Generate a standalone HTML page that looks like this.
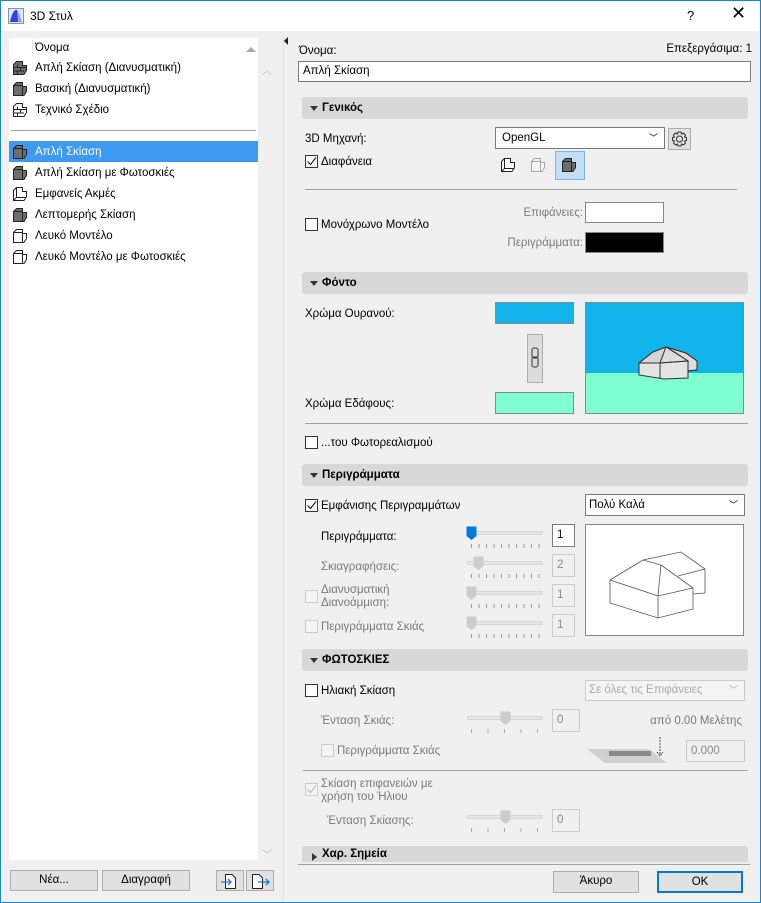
<!DOCTYPE html>
<html><head><meta charset="utf-8"><style>
*{box-sizing:border-box;margin:0;padding:0}
body{width:761px;height:903px;overflow:hidden;background:#f0f0f0;font-family:"Liberation Sans","DejaVu Sans",sans-serif;font-size:11.5px;color:#000;position:relative}
.a{position:absolute;white-space:nowrap}
.t{position:absolute;white-space:nowrap;line-height:14px}
.g{color:#7a7a7a}
.hdr{position:absolute;left:302px;width:446px;height:22px;background:#d8d8d8;border-radius:3px;font-weight:bold;line-height:22px;padding-left:20px}
.hdr:before{content:"";position:absolute;left:8px;top:9px;border-left:4px solid transparent;border-right:4px solid transparent;border-top:5px solid #333}
.hdr.c:before{left:10px;top:7px;border-top:4px solid transparent;border-bottom:4px solid transparent;border-left:5px solid #333;border-right:0}
.cb{position:absolute;width:13px;height:13px;border:1px solid #333;background:#fff}
.cb.d{border-color:#ccc;background:#f4f4f4}
.box{position:absolute;border:1px solid #7a7a7a;background:#fff}
.btn{position:absolute;border:1px solid #adadad;background:#e1e1e1;text-align:center;line-height:19px}
.line{position:absolute;height:1px;background:#a0a0a0}
.trk{position:absolute;height:4px;background:#e7e7e7;border:1px solid #d6d6d6}
.vb{position:absolute;width:23px;height:23px;border:1px solid #ccc;background:#f0f0f0;line-height:21px;padding-left:4px;color:#888}
.ticks{position:absolute;height:4px;background:repeating-linear-gradient(90deg,#999 0 1px,transparent 1px 7.5px)}
</style></head><body>
<div class="a" style="left:0;top:0;width:761px;height:903px;border:1px solid #1883d7;z-index:9;pointer-events:none"></div>
<div class="a" style="left:0;top:0;width:761px;height:31px;background:#fff"></div>
<svg class="a" style="left:8px;top:8px" width="16" height="16"><rect x=".5" y=".5" width="15" height="15" fill="#dfe6f7" stroke="#8090c0"/><path d="M2 14 C4 4 7 1 9 2 C11 4 12 10 14 14 Z" fill="#2c45e0"/><path d="M9 2 C11 4 12 10 14 14 L10 14 Z" fill="#8fa2f5"/></svg>
<div class="t" style="left:30px;top:9px;font-size:12px">3D Στυλ</div>
<div class="t" style="left:687px;top:9px;font-size:13px">?</div>
<div class="t" style="left:731px;top:6px;font-size:18px;font-weight:300">✕</div>

<div class="a" style="left:9px;top:38px;width:249px;height:822px;background:#fff"></div>
<div class="a" style="left:32px;top:39px;width:1px;height:17px;background:#e5e5e5"></div>
<div class="t" style="left:35px;top:41px">Όνομα</div>
<div class="a" style="left:246px;top:47px;border-left:5px solid transparent;border-right:5px solid transparent;border-bottom:5px solid #aaa"></div>
<div class="a" style="left:262px;top:62px;color:#bbb;font-size:10px">︿</div>
<div class="a" style="left:262px;top:846px;color:#bbb;font-size:10px">﹀</div>
<div class="a" style="left:11px;top:130px;width:245px;height:1px;background:#a0a0a0"></div>
<div class="a" style="left:9px;top:141px;width:249px;height:21px;background:#3d9af0"></div>
<svg width="0" height="0" style="position:absolute"><defs>
<g id="cf"><path d="M1.5 4.5 L4.5 1.5 H10.5 V5.5 H14.5 V10.5 L12 14.5 H1.5 Z" fill="#6e6e6e" stroke="#222"/><path d="M1.5 4.5 H10.5 M10.5 5.5 V14.5" stroke="#222" fill="none"/></g>
<g id="cw"><path d="M1.5 4.5 L4.5 1.5 H10.5 V5.5 H14.5 V10.5 L12 14.5 H1.5 Z" fill="#fff" stroke="#222"/><path d="M1.5 4.5 H10.5 M10.5 5.5 V14.5" stroke="#222" fill="none"/></g>
<g id="cb"><path d="M1.5 4.5 L4.5 1.5 H10.5 V5.5 H14.5 V10.5 L12 14.5 H1.5 Z" fill="#6e6e6e" stroke="#222"/><path d="M1.5 7.5 H14.5 M1.5 11 H12 M5.5 4.5 V7.5 M8.5 7.5 V11 M5.5 11 V14.5" stroke="#222" fill="none"/></g>
<g id="cbw"><path d="M1.5 4.5 L4.5 1.5 H10.5 V5.5 H14.5 V10.5 L12 14.5 H1.5 Z" fill="#fff" stroke="#222"/><path d="M1.5 7.5 H14.5 M1.5 11 H12 M5.5 4.5 V7.5 M8.5 7.5 V11 M5.5 11 V14.5" stroke="#222" fill="none"/></g>
<g id="ce"><path d="M1.5 4.5 L4.5 1.5 H10.5 V5.5 H14.5 V10.5 L12 14.5 H1.5 Z" fill="#fff" stroke="#222"/><path d="M4.5 1.5 V11.5 H14.5 M1.5 14.5 L4.5 11.5" stroke="#222" fill="none"/></g>
</defs></svg>
<svg class="a" style="left:12px;top:60px" width="16" height="16"><use href="#cb"/></svg><div class="t" style="left:35px;top:61px">Απλή Σκίαση (Διανυσματική)</div>
<svg class="a" style="left:12px;top:81px" width="16" height="16"><use href="#cf"/></svg><div class="t" style="left:35px;top:82px">Βασική (Διανυσματική)</div>
<svg class="a" style="left:12px;top:102px" width="16" height="16"><use href="#cbw"/></svg><div class="t" style="left:35px;top:103px">Τεχνικό Σχέδιο</div>
<svg class="a" style="left:12px;top:144px" width="16" height="16"><use href="#cf"/></svg><div class="t" style="left:35px;top:145px;color:#fff">Απλή Σκίαση</div>
<svg class="a" style="left:12px;top:165px" width="16" height="16"><use href="#cf"/></svg><div class="t" style="left:35px;top:166px">Απλή Σκίαση με Φωτοσκιές</div>
<svg class="a" style="left:12px;top:186px" width="16" height="16"><use href="#ce"/></svg><div class="t" style="left:35px;top:187px">Εμφανείς Ακμές</div>
<svg class="a" style="left:12px;top:207px" width="16" height="16"><use href="#cf"/></svg><div class="t" style="left:35px;top:208px">Λεπτομερής Σκίαση</div>
<svg class="a" style="left:12px;top:228px" width="16" height="16"><use href="#cw"/></svg><div class="t" style="left:35px;top:229px">Λευκό Μοντέλο</div>
<svg class="a" style="left:12px;top:249px" width="16" height="16"><use href="#cw"/></svg><div class="t" style="left:35px;top:250px">Λευκό Μοντέλο με Φωτοσκιές</div>

<div class="btn" style="left:10px;top:870px;width:88px;height:21px">Νέα...</div>
<div class="btn" style="left:102px;top:870px;width:88px;height:21px">Διαγραφή</div>
<div class="btn" style="left:216px;top:870px;width:28px;height:21px"><svg width="20" height="18" style="margin-top:1px"><path d="M5.5 2.5 H12 L15.5 6 V16.5 H5.5 Z" fill="#fff" stroke="#222"/><path d="M1 10 H11 M8 7 L11 10 L8 13" stroke="#1e73e8" fill="none" stroke-width="1.3"/></svg></div>
<div class="btn" style="left:246px;top:870px;width:28px;height:21px"><svg width="22" height="18" style="margin-top:1px"><path d="M3.5 2.5 H10 L13.5 6 V16.5 H3.5 Z" fill="#fff" stroke="#222"/><path d="M9 10 H20 M17 7 L20 10 L17 13" stroke="#1e73e8" fill="none" stroke-width="1.3"/></svg></div>

<div class="a" style="left:283px;top:33px;width:1px;height:868px;background:#e0e0e0"></div>
<div class="a" style="left:284px;top:37px;border-top:4px solid transparent;border-bottom:4px solid transparent;border-right:4px solid #222"></div>

<div class="t" style="left:299px;top:44px">Όνομα:</div>
<div class="t" style="right:9px;top:42px">Επεξεργάσιμα: 1</div>
<div class="box" style="left:298px;top:61px;width:453px;height:21px;padding-left:4px;line-height:19px">Απλή Σκίαση</div>

<div class="hdr" style="top:97px">Γενικός</div>
<div class="t" style="left:305px;top:132px">3D Μηχανή:</div>
<div class="box" style="left:495px;top:127px;width:170px;height:22px;padding-left:6px;line-height:20px">OpenGL<span class="a" style="right:6px;top:0;font-size:9px">﹀</span></div>
<div class="a" style="left:668px;top:128px;width:23px;height:22px;border:1px solid #adadad;background:#e1e1e1"><svg width="21" height="20"><circle cx="10.5" cy="10" r="3" fill="none" stroke="#333"/><path d="M9 3 H12 L12.5 5 L14.5 4 L16.5 6 L15.5 8 L17.5 8.5 V11.5 L15.5 12 L16.5 14 L14.5 16 L12.5 15 L12 17 H9 L8.5 15 L6.5 16 L4.5 14 L5.5 12 L3.5 11.5 V8.5 L5.5 8 L4.5 6 L6.5 4 L8.5 5 Z" fill="none" stroke="#333"/></svg></div>
<div class="cb" style="left:305px;top:155px"><svg width="11" height="11" style="position:absolute;left:0;top:0"><path d="M1.5 5.5 L4.5 8.5 L10 1.5" stroke="#222" fill="none" stroke-width="1.2"/></svg></div>
<div class="t" style="left:321px;top:155px">Διαφάνεια</div>
<svg class="a" style="left:500px;top:157px" width="18" height="18"><use href="#ce"/></svg>
<svg class="a" style="left:530px;top:157px;opacity:.35" width="18" height="18"><use href="#cw"/></svg>
<div class="a" style="left:555px;top:151px;width:30px;height:29px;background:#c4def5;border:1px solid #7ab4e8"></div>
<svg class="a" style="left:561px;top:157px" width="18" height="18"><use href="#cf"/></svg>
<div class="line" style="left:305px;top:189px;width:432px"></div>
<div class="cb" style="left:305px;top:218px"></div>
<div class="t" style="left:321px;top:218px">Μονόχρωνο Μοντέλο</div>
<div class="t g" style="right:178px;top:206px">Επιφάνειες:</div>
<div class="t g" style="right:178px;top:236px">Περιγράμματα:</div>
<div class="a" style="left:585px;top:202px;width:79px;height:21px;background:#fff;border:1px solid #888"></div>
<div class="a" style="left:585px;top:232px;width:79px;height:21px;background:#000;border:1px solid #888"></div>

<div class="hdr" style="top:272px">Φόντο</div>
<div class="t" style="left:305px;top:307px">Χρώμα Ουρανού:</div>
<div class="t" style="left:305px;top:397px">Χρώμα Εδάφους:</div>
<div class="a" style="left:495px;top:302px;width:79px;height:22px;background:#12b4ec;border:1px solid #888"></div>
<div class="a" style="left:495px;top:392px;width:79px;height:22px;background:#7fffd0;border:1px solid #888"></div>
<div class="a" style="left:527px;top:334px;width:16px;height:49px;background:#dcdcdc;border:1px solid #adadad"><svg width="14" height="47"><rect x="4" y="13" width="6" height="10" rx="2" fill="none" stroke="#333"/><rect x="4" y="22" width="6" height="10" rx="2" fill="none" stroke="#333"/></svg></div>
<div class="a" style="left:585px;top:302px;width:159px;height:112px;border:1px solid #888;background:linear-gradient(#12b4ec 0 70px,#7fffd0 70px)"><svg width="157" height="110"><g stroke="#333" stroke-width="1"><path d="M90 50 L80 44 L100 50 L111 58 V67 L100 68 Z" fill="#ddd"/><path d="M53 60 L67 49 L80 44 L90 50 L102 58 L102 75 L78 76 L53 72 Z" fill="#e4e4e4"/><path d="M53 60 L67 49 L80 44 L74 60 Z" fill="#d6d6d6"/><path d="M74 60 L80 44 L102 58 Z" fill="#ddd"/><path d="M53 60 L74 60 L102 58 M74 60 V76 M80 44 L100 50 L111 58 V67 L102 68" fill="none"/></g></svg></div>
<div class="line" style="left:305px;top:423px;width:443px"></div>
<div class="cb" style="left:305px;top:436px"></div>
<div class="t" style="left:321px;top:436px">...του Φωτορεαλισμού</div>

<div class="hdr" style="top:464px">Περιγράμματα</div>
<div class="cb" style="left:305px;top:499px"><svg width="11" height="11" style="position:absolute;left:0;top:0"><path d="M1.5 5.5 L4.5 8.5 L10 1.5" stroke="#222" fill="none" stroke-width="1.2"/></svg></div>
<div class="t" style="left:321px;top:499px">Εμφάνισης Περιγραμμάτων</div>
<div class="box" style="left:585px;top:494px;width:160px;height:22px;padding-left:3px;line-height:20px">Πολύ Καλά<span class="a" style="right:6px;top:0;font-size:9px">﹀</span></div>

<div class="t" style="left:321px;top:530px">Περιγράμματα:</div>
<div class="t g" style="left:321px;top:560px">Σκιαγραφήσεις:</div>
<div class="t g" style="left:321px;top:584px;line-height:13px">Διανυσματική<br>Διανοάμμιση:</div>
<div class="t g" style="left:321px;top:620px">Περιγράμματα Σκιάς</div>
<div class="cb d" style="left:305px;top:590px"></div>
<div class="cb d" style="left:305px;top:620px"></div>

<div class="trk" style="left:467px;top:531px;width:76px"></div><div class="ticks" style="left:471px;top:544px;width:70px"></div>
<svg class="a" style="left:466px;top:526px" width="11" height="15"><path d="M.5 .5 H10.5 V10 L5.5 14 L.5 10 Z" fill="#0078d7"/></svg>
<div class="trk" style="left:467px;top:561px;width:76px"></div><div class="ticks" style="left:471px;top:574px;width:70px"></div>
<svg class="a" style="left:473px;top:556px" width="11" height="15"><path d="M.5 .5 H10.5 V10 L5.5 14 L.5 10 Z" fill="#ccc"/></svg>
<div class="trk" style="left:467px;top:591px;width:76px"></div><div class="ticks" style="left:471px;top:604px;width:70px"></div>
<svg class="a" style="left:466px;top:586px" width="11" height="15"><path d="M.5 .5 H10.5 V10 L5.5 14 L.5 10 Z" fill="#ccc"/></svg>
<div class="trk" style="left:467px;top:621px;width:76px"></div><div class="ticks" style="left:471px;top:634px;width:70px"></div>
<svg class="a" style="left:466px;top:616px" width="11" height="15"><path d="M.5 .5 H10.5 V10 L5.5 14 L.5 10 Z" fill="#ccc"/></svg>
<div class="vb" style="left:552px;top:524px;border-color:#7a7a7a;background:#fff;color:#000">1</div>
<div class="vb" style="left:552px;top:554px">2</div>
<div class="vb" style="left:552px;top:584px">1</div>
<div class="vb" style="left:552px;top:614px">1</div>
<div class="a" style="left:585px;top:524px;width:159px;height:112px;background:#fff;border:1px solid #888"><svg width="157" height="110"><g fill="none" stroke="#555" stroke-width=".8"><path d="M24 55 L57 35 L95 27 L119 44 V68 L107 69"/><path d="M24 55 V78 L72 93 L107 84 V63 L75 40 L57 35"/><path d="M24 55 L72 71 L107 63 M72 71 V93 M75 40 L72 71 M92 51 L119 44"/></g></svg></div>

<div class="hdr" style="top:649px">ΦΩΤΟΣΚΙΕΣ</div>
<div class="cb" style="left:305px;top:684px"></div>
<div class="t" style="left:321px;top:684px">Ηλιακή Σκίαση</div>
<div class="a" style="left:585px;top:680px;width:160px;height:21px;border:1px solid #ccc;background:#f4f4f4;color:#aaa;line-height:19px;padding-left:3px">Σε όλες τις Επιφάνειες<span class="a" style="right:6px;top:0;font-size:9px">﹀</span></div>
<div class="t g" style="left:321px;top:714px">Ένταση Σκιάς:</div>
<div class="trk" style="left:467px;top:716px;width:76px"></div><div class="ticks" style="left:471px;top:729px;width:70px;background:repeating-linear-gradient(90deg,#aaa 0 1px,transparent 1px 16.5px)"></div>
<svg class="a" style="left:500px;top:711px" width="11" height="15"><path d="M.5 .5 H10.5 V10 L5.5 14 L.5 10 Z" fill="#ccc"/></svg>
<div class="vb" style="left:552px;top:709px;width:28px">0</div>
<div class="t g" style="right:19px;top:714px">από 0.00 Μελέτης</div>
<div class="cb d" style="left:321px;top:744px"></div>
<div class="t g" style="left:337px;top:744px">Περιγράμματα Σκιάς</div>
<svg class="a" style="left:587px;top:737px" width="90" height="27"><path d="M0 12 H62 L80 26 H18 Z" fill="#d0d0d0"/><rect x="22" y="14" width="42" height="5" fill="#888"/><path d="M73 0 V18 M70 15 L73 19 L76 15" stroke="#222" fill="none" stroke-width=".8" stroke-dasharray="2 1"/></svg>
<div class="vb" style="left:686px;top:740px;width:59px;height:22px">0.000</div>
<div class="line" style="left:303px;top:770px;width:445px"></div>
<div class="cb d" style="left:305px;top:783px"><svg width="11" height="11" style="position:absolute;left:0;top:0"><path d="M1.5 5.5 L4.5 8.5 L10 1.5" stroke="#bbb" fill="none" stroke-width="1.2"/></svg></div>
<div class="t g" style="left:321px;top:778px;line-height:13px">Σκίαση επιφανειών με<br>χρήση του Ήλιου</div>
<div class="t g" style="left:327px;top:814px">Ένταση Σκίασης:</div>
<div class="trk" style="left:467px;top:815px;width:76px"></div><div class="ticks" style="left:471px;top:828px;width:70px;background:repeating-linear-gradient(90deg,#aaa 0 1px,transparent 1px 16.5px)"></div>
<svg class="a" style="left:500px;top:810px" width="11" height="15"><path d="M.5 .5 H10.5 V10 L5.5 14 L.5 10 Z" fill="#ccc"/></svg>
<div class="vb" style="left:552px;top:809px;width:28px">0</div>

<div class="hdr c" style="top:846px;height:16px;line-height:16px;border-radius:3px 3px 0 0">Χαρ. Σημεία</div>
<div class="a" style="left:298px;top:864px;width:452px;height:1px;background:#a0a0a0"></div>
<div class="btn" style="left:553px;top:871px;width:86px;height:22px">Άκυρο</div>
<div class="btn" style="left:657px;top:871px;width:86px;height:22px;border:2px solid #0078d7;line-height:18px">OK</div>
</body></html>
